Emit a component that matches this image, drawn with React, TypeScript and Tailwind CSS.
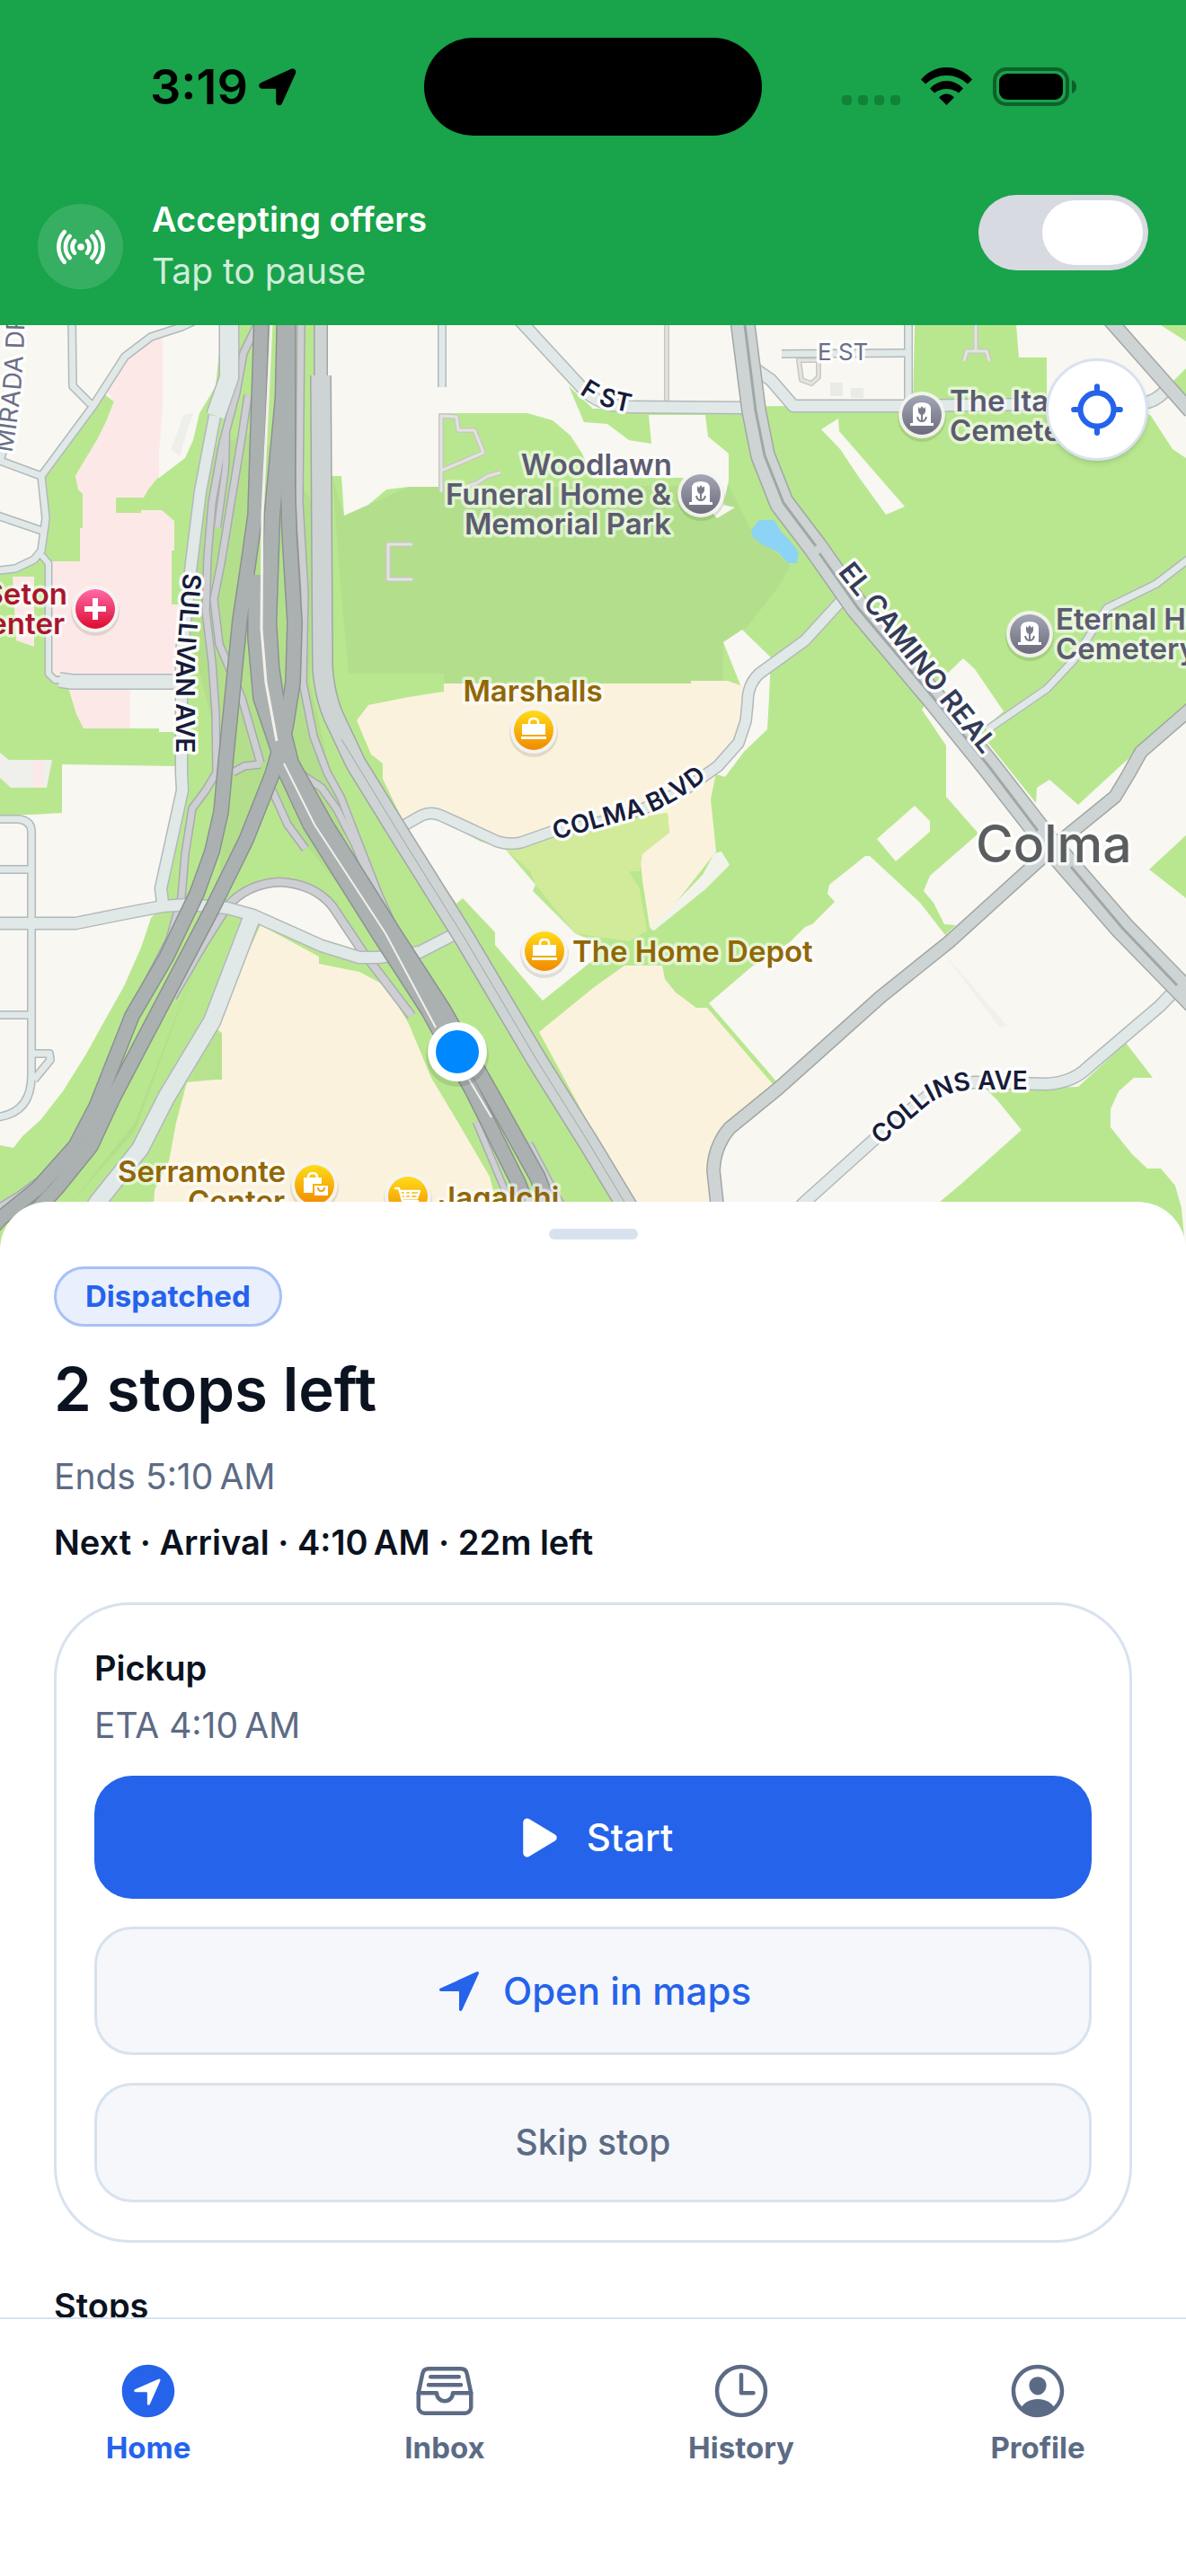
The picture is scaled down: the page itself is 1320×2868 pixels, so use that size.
import type { ReactNode } from 'react';
import {
  IoFileTrayFullOutline,
  IoLocate,
  IoNavigate,
  IoNavigateCircle,
  IoPersonCircleOutline,
  IoPlay,
  IoRadio,
  IoTimeOutline,
} from 'react-icons/io5';

type RoadKind = 'minor' | 'arterial' | 'ramp' | 'freeway' | 'path';
type Road = { d: string; w: number };

const PAINT: Record<RoadKind, { fill: string; casing: string }> = {
  path: { fill: '#e4e4de', casing: '#c8c9c2' },
  minor: { fill: '#e1e8e8', casing: '#b2b9ba' },
  arterial: { fill: '#ced4d4', casing: '#a1a7a7' },
  ramp: { fill: '#cdcfd2', casing: '#a9abb0' },
  freeway: { fill: '#abb1b1', casing: '#8c9191' },
};

const PATHS: Road[] = [
  { d: 'M742 355V450', w: 3 },
  { d: 'M491 548V463L508 464L510 479H528L538 504L491 524M520 541L530 538L543 530L557 526', w: 3 },
  { d: 'M459 606H432V645H459', w: 3 },
  { d: 'M1086 355V391M1073 402L1076 391H1098L1101 402', w: 3 },
  { d: 'M889 401H911V420L903 427L892 423Z', w: 3 },
];

const MINOR: Road[] = [
  { d: 'M215 358L202 364L168 375L139 397L103 453L46 530L51 577L46 613L38 623L17 633L0 635H-10', w: 7 },
  { d: 'M80 355L81 430L101 450', w: 7 },
  { d: 'M4 500L0 513L46 530M-5 573L0 575L50 592', w: 7 },
  { d: 'M46 618L54 627V750L61 757H75', w: 6 },
  { d: 'M66 757L80 759H200', w: 15 },
  { d: 'M492 355V431', w: 7 },
  { d: 'M577 355L648 432Q665 452 702 453L828 454', w: 12 },
  { d: 'M842 412L858 423L883 452L1005 452L1165 450L1270 449Q1286 448 1298 434', w: 12 },
  { d: 'M870 394L1009 393', w: 7 },
  { d: 'M1011 355V447', w: 7 },
  { d: 'M938 667L896 713L845 750Q832 762 832 783L830 803L822 827L799 853L761 880L715 901L660 918L614 926L580 938Q568 941 554 937L491 908Q480 903 469 908L446 921', w: 11 },
  { d: 'M1330 617L1287 650L1232 677L1195 735L1165 767L1098 813', w: 7 },
  { d: 'M1310 1100L1291 1120L1210 1189Q1194 1205 1165 1207L1085 1205Q1058 1205 1039 1215L976 1266L896 1338L855 1380', w: 12 },
  { d: 'M-5 912H21Q35 914 35 926V1195Q36 1240 -5 1244M-5 968H35M-5 1130H35M38 1173H55L56 1180L38 1202', w: 7 },
  { d: 'M-5 1028H84L139 1017L181 1009L210 1007L253 1011L282 1019L358 1053L400 1066H421L467 1060L504 1041', w: 12 },
  { d: 'M280 1022L236 1137L185 1222L156 1279L109 1338L70 1400', w: 18 },
  { d: 'M255 355V420L240 463', w: 20 },
  { d: 'M239 463L223 547L213 627L202 727V860L203 880L179 989L181 1005', w: 12 },
];

const ARTERIAL: Road[] = [
  { d: 'M357 355V420', w: 13 },
  { d: 'M357 418L359 743Q361 773 371 797L396 850L446 931L518 1046L598 1181L655 1272L702 1350L725 1400', w: 21 },
  { d: 'M1330 785L1270 837L1256 862L1241 887L1182 935L1152 962L1056 1049L980 1110L866 1212L812 1256Q795 1276 794 1303L798 1340L806 1400', w: 13 },
  { d: 'M1234 355L1325 458', w: 14 },
  { d: 'M826 355L839 457L849 507L870 560L908 610L955 677L1039 777L1102 855L1169 941L1249 1033L1330 1116', w: 25 },
];

const RAMPS: Road[] = [
  { d: 'M286 362L271 393L263 437L248 493L236 560L231 620L229 680L236 737L240 793L241 860L229 880L214 900L206 951L202 999L189 1046L152 1117', w: 7 },
  { d: 'M276 440L269 487L257 560L246 627L238 667L244 717L269 777L290 850', w: 7 },
  { d: 'M252 483L251 520L242 587', w: 6 },
  { d: 'M335 355L333 560L339 660L337 760L349 820L364 860L379 887L400 941L421 995L446 1050L467 1087', w: 7 },
  { d: 'M259 860L272 853L290 851', w: 7 },
  { d: 'M332 860L358 877L375 901L395 940L414 985', w: 7 },
  { d: 'M303 880L320 918L340 945', w: 7 },
  { d: 'M192 1110L227 1050L253 1009Q275 984 311 982Q350 984 370 1009L404 1060L458 1131', w: 8 },
  { d: 'M530 1249L564 1330L580 1370M589 1273L623 1338L645 1390', w: 6 },
  { d: 'M-5 1347L20 1332L50 1310', w: 7 },
];

const FREEWAY: Road[] = [
  { d: 'M291 355L284 573L276 630L267 690L251 850L246 904L236 948L219 995L185 1066L147 1131L107 1232L84 1276L42 1323L0 1357L-20 1380', w: 15 },
  { d: 'M284 640V710L290 777L307 827L318 860L345 918L421 1039L476 1124L526 1215L577 1317L605 1390', w: 15 },
  { d: 'M320 527L322 593L328 693L326 760L318 810L303 862L274 935L236 1012L181 1117L126 1222L101 1276L63 1323L20 1370', w: 15 },
  { d: 'M317 355L315 443L303 573L299 693L302 743L309 790L324 850L362 918L438 1039L493 1124L545 1215L598 1310L630 1390', w: 16 },
  { d: 'M320 355V540', w: 16 },
];

function Roads({ list, kind }: { list: Road[]; kind: RoadKind }) {
  const { fill, casing } = PAINT[kind];
  return (
    <g fill="none" strokeLinejoin="round">
      {list.map((r) => (
        <path key={`c${r.d}`} d={r.d} stroke={casing} strokeWidth={r.w + 3} />
      ))}
      {list.map((r) => (
        <path key={r.d} d={r.d} stroke={fill} strokeWidth={r.w} />
      ))}
    </g>
  );
}

function Land() {
  return (
    <g>
      <rect x="0" y="362" width="1320" height="1038" fill="#b9e78f" />
      <g fill="#b3df8c">
        <path d="M370 532L383 574L455 542H660L811 540L836 590L880 630L865 655L830 700L805 715V761H494V750H388L378 640Z" />
        <path d="M232 500L285 480L350 560L345 760L400 1000L500 1150L560 1270L500 1140L300 890L250 990L150 1250L80 1338L150 1260L245 1000V840L210 700Z" />
      </g>
      <g fill="#f8f7f2">
        <path d="M0 362H247L240 430L222 460L215 490L206 510L177 532L84 530L50 600L45 615L35 628L0 637Z" />
        <path d="M145 766H197V815H177V811H145Z" />
        <path d="M69 851L197 853V880L180 985V1010L168 1022L157 1055L138 1098L120 1130L95 1175L70 1215L45 1247L35 1256L25 1265L15 1278L0 1275V907H35L69 905Z" />
        <path d="M363 362H1018L1016 450L660 455L633 430L650 470L676 472L700 490L725 494L722 462H785L788 486L811 505V535L805 562L818 565L798 577L760 532H660L648 505L635 485L615 468L587 460H488V542H455L430 545L410 562L383 574L380 530H369Z" />
        <path d="M1131 362H1292L1320 380V410L1304 426L1320 440V510L1305 500L1281 463L1260 450H1165V398H1134Z" />
        <path d="M914 478L933 466L934 480L1007 564L986 573L955 530L935 500Z" />
        <path d="M805 715L826 701L858 732L856 777L854 812L828 837L807 865L790 860L825 765Z" />
        <path d="M450 925L480 908L535 937L562 945L596 985L593 992L640 1039L660 1048L665 1065L604 1114L590 1098L551 1052V1038L515 1000L508 1006Z" />
        <path d="M789 1117L837 1076L879 1049L896 1032L904 1029L929 1004L921 995L923 985L963 953H968L1024 1005L1052 1041L1064 1030L1051 1029L1039 1005L1028 992L1035 975L1089 928L1053 887V830L1026 790L1052 752L1072 733L1085 745L1117 792L1090 815L1153 894L1154 877L1168 868L1200 896L1250 850L1320 790V1400H790V1280L865 1205Z" />
        <path d="M976 934L1018 897L1035 914V926L997 959Z" />
        <path d="M258 1004L285 990L330 985L365 1003L404 1062L380 1058L290 1018Z" />
      </g>
      <g fill="#b9e78f">
        <path d="M115 438L127 447L118 470L108 490L97 508L84 530L87 545L92 550V588H89V625H50L52 560L46 530Z" />
        <path d="M1279 968L1320 930V1000Z" />
        <path d="M1253 1161L1283 1200H1262L1245 1215L1236 1235V1255L1260 1285L1277 1301H1292L1308 1320L1315 1345L1320 1400H1046V1338L1070 1318L1137 1258L1110 1225L1097 1212L1200 1210Z" />
      </g>
      <path d="M0 838L10 846H58L52 877H12L0 866Z" fill="#efefeb" />
      <g fill="#fce9e7">
        <path d="M181 372L160 377L140 400L118 435L127 447L118 470L108 490L97 508L84 530L87 545L92 550V588H89V625H58V752H200V673H191V613H194V580L180 568H157V571H129V554H160L165 545L177 530V505L181 455Z" />
        <path d="M76 766H145V811H93L85 795ZM14 642H38V720L18 713ZM36 846H48V877H38Z" />
      </g>
      <g fill="#fbf2dd">
        <path d="M494 761H769V758H810L830 765V803L822 827L799 853L795 870L791 890L797 948L728 1036L723 1032L715 980L712 950L745 927L743 905L614 926L572 941L480 905L450 917L426 867V850L413 840L397 802L410 785L455 776L494 770Z" />
        <path d="M660 1100L695 1075H737L740 1090L752 1105L775 1122H787L860 1207L812 1258L795 1285V1400H720L660 1260L600 1149Z" />
        <path d="M290 1030L355 1065V1073L400 1082L430 1098L455 1140L480 1200L510 1250L545 1310L560 1370V1400H168L172 1325L188 1293L196 1250L208 1205L240 1202V1150H247L240 1145L262 1090Z" />
      </g>
      <path d="M562 945L614 926L743 905L745 927L715 951L712 970H700L712 990L720 1036L700 1048L640 1039L596 985L590 970Z" fill="#d2eb9b" />
      <path d="M782 974L795 950L803 948L812 963L785 990L728 1036L724 1034Z" fill="#f2f4ec" />
      <path d="M836 590L845 579H862L868 590L880 603L889 615L887 627H877L865 614L848 606L838 598Z" fill="#8cd3f5" />
      <path d="M204 462L215 460L208 480L200 508L190 500L198 480Z" fill="#eeefeb" />
      <path d="M924 426H938V441H924ZM947 432H961V443H947Z" fill="#e8ebe7" />
      <path d="M1049 1060L1058 1070L1121 1142L1112 1143Z" fill="#f3f0eb" />
      <path d="M215 1150H247V1202H215Z" fill="#b7e38f" />
    </g>
  );
}

function Pin({ x, y, fill, children }: { x: number; y: number; fill: string; children: ReactNode }) {
  return (
    <g transform={`translate(${x} ${y})`}>
      <circle r="27" cy="3" fill="#000" opacity="0.1" />
      <circle r="26" fill="#f6f5f2" opacity="0.92" />
      <circle r="22" fill={fill} />
      {children}
    </g>
  );
}

function GraveGlyph() {
  return (
    <g>
      <path d="M-13 12V9H-10V-8Q-9 -14 0 -14Q9 -14 10 -8V9H13V12Z" fill="#fff" />
      <path d="M-4 -9L-2 -7L0 -10L2 -7L4 -9V-4Q3 0 0 0Q-3 0 -4 -4Z" fill="#7b7c8b" />
      <path d="M0 -2V7M-5 2Q-4 7 0 7Q4 7 5 2" fill="none" stroke="#7b7c8b" strokeWidth="2" />
    </g>
  );
}

function BagGlyph() {
  return (
    <g>
      <path d="M-13 -7H13V5H-13ZM-14 7H14V10H-14Z" fill="#fff" />
      <path d="M-5 -7V-9Q-5 -13 0 -13Q5 -13 5 -9V-7" fill="none" stroke="#fff" strokeWidth="2.5" />
    </g>
  );
}

const ROAD_LABEL = 'font-semibold text-[28px]';
const POI_LABEL = 'font-semibold text-[33px]';

function MapLabels() {
  return (
    <g
      className="font-['Inter',sans-serif]"
      stroke="#ffffff"
      strokeOpacity="0.62"
      strokeWidth="7"
      strokeLinejoin="round"
      paintOrder="stroke"
    >
      <defs>
        <path id="mirada" d="M10 520Q28 440 28 310" />
        <path id="fst" d="M645 438Q668 456 720 462" />
        <path id="sullivan" d="M204 638L196 740V870" />
        <path id="camino" d="M932 637L1105 855" />
        <path id="colma" d="M618 935L715 908Q755 895 805 852" />
        <path id="collins" d="M980 1275L1035 1228Q1060 1213 1090 1213H1190" />
      </defs>
      <g className={ROAD_LABEL} fill="#171c3a" strokeOpacity="0.95">
        <text className="font-normal" fill="#6b6f86">
          <textPath href="#mirada" startOffset="16">MIRADA DR</textPath>
        </text>
        <text>
          <textPath href="#fst">F ST</textPath>
        </text>
        <text>
          <textPath href="#sullivan">SULLIVAN AVE</textPath>
        </text>
        <text className="text-[31px]" fill="#343b57">
          <textPath href="#camino">EL CAMINO REAL</textPath>
        </text>
        <text>
          <textPath href="#colma">COLMA BLVD</textPath>
        </text>
        <text>
          <textPath href="#collins">COLLINS AVE</textPath>
        </text>
        <text x="910" y="401" className="text-[26px] font-normal" fill="#6b6f86">E ST</text>
      </g>
      <text x="1086" y="960" className="text-[57px] font-medium" fill="#5a5e5f" strokeOpacity="0.8">Colma</text>
      <g className={POI_LABEL} fill="#a8152e">
        <text x="75" y="673" textAnchor="end">Seton</text>
        <text x="72" y="706" textAnchor="end">Center</text>
      </g>
      <g className={POI_LABEL} fill="#5c5b70">
        <g textAnchor="end">
          <text x="748" y="529">Woodlawn</text>
          <text x="747" y="562">Funeral Home &amp;</text>
          <text x="747" y="595">Memorial Park</text>
        </g>
        <text x="1057" y="458">The Italian</text>
        <text x="1057" y="491">Cemetery</text>
        <text x="1175" y="701">Eternal Home</text>
        <text x="1175" y="734">Cemetery</text>
      </g>
      <g className={POI_LABEL} fill="#916708">
        <text x="593" y="781" textAnchor="middle">Marshalls</text>
        <text x="637" y="1071">The Home Depot</text>
        <text x="318" y="1316" textAnchor="end">Serramonte</text>
        <text x="317" y="1349" textAnchor="end">Center</text>
        <text x="488" y="1345">Jagalchi</text>
      </g>
    </g>
  );
}

function CityMap() {
  return (
    <svg
      viewBox="0 362 1320 1038"
      preserveAspectRatio="xMidYMin slice"
      className="block h-full w-full"
      role="img"
      aria-label="Map of Colma"
    >
      <defs>
        <linearGradient id="gray" x1="0" y1="0" x2="0" y2="1">
          <stop offset="0" stopColor="#a2a7b5" />
          <stop offset="1" stopColor="#6c6b7c" />
        </linearGradient>
        <linearGradient id="gold" x1="0" y1="0" x2="0" y2="1">
          <stop offset="0" stopColor="#ffdc17" />
          <stop offset="1" stopColor="#f08a00" />
        </linearGradient>
        <linearGradient id="rose" x1="0" y1="0" x2="0" y2="1">
          <stop offset="0" stopColor="#ff6aa8" />
          <stop offset="1" stopColor="#dc0c2f" />
        </linearGradient>
      </defs>
      <Land />
      <Roads list={PATHS} kind="path" />
      <Roads list={RAMPS} kind="ramp" />
      <Roads list={MINOR} kind="minor" />
      <Roads list={ARTERIAL} kind="arterial" />
      <g fill="none" stroke="#a1a7a7" strokeWidth="3">
        <path d="M829 362L841 457L851 507L872 560L908 608M912 616L955 677L1039 777L1102 855L1155 925M1192 965L1249 1033L1310 1097" />
        <path d="M380 823L446 931L518 1046L598 1181L655 1272L702 1350" strokeWidth="1" />
      </g>
      <Roads list={FREEWAY} kind="freeway" />
      <g fill="none" stroke="#f3f0ec" strokeWidth="3">
        <path d="M302 362L292 573L291 700L296 760L308 825" />
        <path d="M316 850L350 918L429 1039L485 1144M522 1202L547 1244" strokeWidth="2" />
      </g>
      <MapLabels />
      <Pin x={106} y={678} fill="url(#rose)">
        <path d="M-12 0H12M0 -12V12" stroke="#fff" strokeWidth="6" />
      </Pin>
      <Pin x={780} y={550} fill="url(#gray)"><GraveGlyph /></Pin>
      <Pin x={1026} y={462} fill="url(#gray)"><GraveGlyph /></Pin>
      <Pin x={1146} y={706} fill="url(#gray)"><GraveGlyph /></Pin>
      <Pin x={594} y={813} fill="url(#gold)"><BagGlyph /></Pin>
      <Pin x={606} y={1059} fill="url(#gold)"><BagGlyph /></Pin>
      <Pin x={350} y={1319} fill="url(#gold)">
        <path d="M-12 -8H8V-1H-2V9H-12ZM0 1H15V12H0Z" fill="#fff" />
        <path d="M-7 -8Q-7 -13 -2 -13Q3 -13 3 -8" fill="none" stroke="#fff" strokeWidth="2.5" />
        <path d="M4 3Q4 7 8 7Q11 7 11 3" fill="none" stroke="#f3a308" strokeWidth="2" />
      </Pin>
      <Pin x={454} y={1332} fill="url(#gold)">
        <path d="M-14 -9H-10L-6 5H11M-9 -6H13L10 2H-7M-3 -6V2M3 -6V2M-8 -2H11" fill="none" stroke="#fff" strokeWidth="2.4" strokeLinejoin="round" strokeLinecap="round" />
      </Pin>
      <circle cx="509" cy="1175" r="35" fill="#000" opacity="0.1" />
      <circle cx="509" cy="1171" r="33" fill="#fff" />
      <circle cx="509" cy="1171" r="24" fill="#0088ff" />
    </svg>
  );
}

function StatusBar() {
  return (
    <div className="grid grid-cols-[1fr_auto_1fr] items-center pt-[42px]">
      <div className="flex items-center gap-3 pl-[167px] text-[54px] leading-[60px] font-semibold text-black">
        <span>3:19</span>
        <svg viewBox="0 0 42 42" className="h-[42px] w-[42px]" aria-hidden="true">
          <path
            d="M36 0.8C39.5 -0.6 42.4 2.4 41 5.8L26 39C24.5 42.6 19.2 42 19.2 37.6V24Q19.2 22.8 18 22.8H4C-0.4 22.8 -1.2 17.6 2.6 15.9Z"
            fill="#000"
          />
        </svg>
      </div>
      <div className="h-[109px] w-[376px] rounded-full bg-black" />
      <div className="flex justify-end pr-[121px]">
        <svg viewBox="0 0 262 44" className="h-[44px] w-[262px]" role="img" aria-label="No cellular signal, Wi-Fi on, battery full">
          <g fill="#138239">
            <rect x="0" y="31" width="11" height="11" rx="4" />
            <rect x="18" y="31" width="11" height="11" rx="4" />
            <rect x="36" y="31" width="11" height="11" rx="4" />
            <rect x="54" y="31" width="11" height="11" rx="4" />
          </g>
          <path d="M88 13.5Q100 0 116.500 0Q133 0 145 13.500L140 18.500Q130 9 116.500 9Q103 9 93 18.500Z" />
          <path d="M98 23.500Q106 15 116.500 15Q127 15 135 23.500L130 28.500Q124 24 116.500 24Q109 24 103 28.500Z" />
          <path d="M108 33.500Q112 29.500 116.500 29.500Q121 29.500 125 33.500L116.500 42Z" />
          <rect x="170" y="2" width="81" height="39" rx="13" fill="none" stroke="#0d612a" strokeWidth="4" />
          <rect x="175" y="7" width="71" height="29" rx="9" />
          <path d="M256 14Q261 16 261 21.500Q261 27 256 29Z" fill="#0d612a" />
        </svg>
      </div>
    </div>
  );
}

const TABS = [
  { label: 'Home', Icon: IoNavigateCircle, active: true },
  { label: 'Inbox', Icon: IoFileTrayFullOutline, active: false },
  { label: 'History', Icon: IoTimeOutline, active: false },
  { label: 'Profile', Icon: IoPersonCircleOutline, active: false },
];

export default function App() {
  return (
    <div className="flex h-screen flex-col overflow-hidden bg-white font-['Inter',sans-serif] text-[#0b1220]">
      <header className="shrink-0 bg-[#19a34a] pb-[30px]">
        <StatusBar />
        <div className="mt-[66px] flex items-start justify-between px-[42px]">
          <div className="flex items-center gap-8">
            <div className="flex h-[95px] w-[95px] items-center justify-center rounded-full bg-white/13 text-white">
              <IoRadio size={54} />
            </div>
            <div>
              <p className="text-[38px] leading-[54px] font-semibold text-white">Accepting offers</p>
              <p className="text-[39px] leading-[61px] text-white/80">Tap to pause</p>
            </div>
          </div>
          <label className="relative block h-[84px] w-[189px] cursor-pointer rounded-full bg-[#d7dae0] p-[6px]">
            <input type="checkbox" role="switch" defaultChecked aria-label="Accepting offers" className="peer sr-only" />
            <span className="block h-[72px] w-[112px] rounded-full bg-white peer-checked:ml-auto" />
          </label>
        </div>
      </header>

      <section className="relative h-[1038px] shrink-0 overflow-hidden">
        <CityMap />
        <button
          type="button"
          aria-label="Center on my location"
          className="absolute top-[37px] right-[42px] flex h-[114px] w-[114px] items-center justify-center rounded-full border-[3px] border-[#d8e2ef] bg-white text-[#2563eb] shadow-md"
        >
          <IoLocate size={66} />
        </button>
      </section>

      <main className="relative -mt-[62px] min-h-0 flex-1 overflow-hidden rounded-t-[54px] bg-white px-[60px] pt-[30px]">
        <div className="mx-auto h-3 w-[99px] rounded-full bg-[#d8e2ef]" />
        <div className="mt-[30px] flex">
          <span className="rounded-full border-[3px] border-[#a8c1f7] bg-[#e9effd] px-8 py-[9px] text-[33px] leading-[43px] font-bold text-[#2563eb]">
            Dispatched
          </span>
        </div>
        <h1 className="mt-[28px] text-[67px] leading-[84px] font-semibold">2 stops left</h1>
        <p className="mt-[29px] text-[39px] leading-[51px] text-[#5c6b85]">Ends 5:10{'\u202f'}AM</p>
        <p className="mt-[23px] text-[38px] leading-[51px] font-semibold">
          Next · Arrival · 4:10{'\u202f'}AM · 22m left
        </p>

        <section className="mt-[41px] rounded-[84px] border-[3px] border-[#d8e2ef] p-[42px]">
          <h2 className="text-[38px] leading-[57px] font-semibold">Pickup</h2>
          <p className="mt-[6px] text-[39px] leading-[57px] text-[#5c6b85]">ETA 4:10{'\u202f'}AM</p>
          <div className="mt-[28px] flex flex-col gap-[31px]">
            <button type="button" className="flex h-[137px] items-center justify-center gap-[22px] rounded-[42px] bg-[#2563eb] text-[42px] font-medium text-white">
              <IoPlay size={60} />
              Start
            </button>
            <button type="button" className="flex h-[143px] items-center justify-center gap-[22px] rounded-[42px] border-[3px] border-[#d8e2ef] bg-[#f5f7fb] text-[42px] font-medium text-[#2563eb]">
              <IoNavigate size={54} />
              Open in maps
            </button>
            <button type="button" className="flex h-[133px] items-center justify-center rounded-[42px] border-[3px] border-[#d8e2ef] bg-[#f5f7fb] text-[39px] font-medium text-[#5c6b85]">
              Skip stop
            </button>
          </div>
        </section>
        <h2 className="mt-[42px] text-[38px] leading-[57px] font-semibold">Stops</h2>
      </main>

      <nav className="relative grid h-[288px] shrink-0 grid-cols-4 items-start border-t-2 border-[#d8e2ef] bg-white pt-[44px]">
        {TABS.map(({ label, Icon, active }) => (
          <a
            key={label}
            href={`#${label.toLowerCase()}`}
            aria-current={active ? 'page' : undefined}
            className={`flex flex-col items-center gap-[7px] text-[33px] leading-[40px] font-bold ${active ? 'text-[#2563eb]' : 'text-[#5c6b85]'}`}
          >
            <Icon size={72} />
            {label}
          </a>
        ))}
      </nav>
    </div>
  );
}
